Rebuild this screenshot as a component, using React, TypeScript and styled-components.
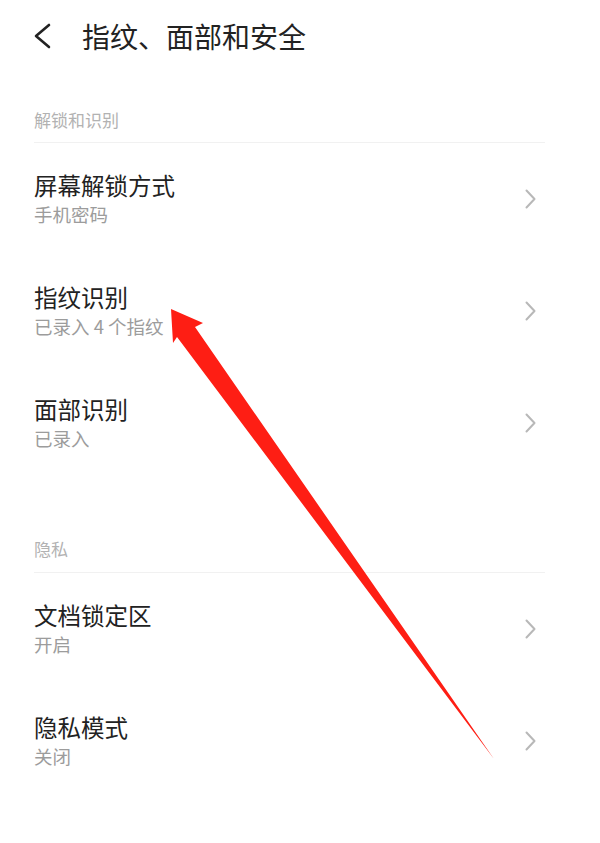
import React from "react";
import styled, { createGlobalStyle } from "styled-components";

const Global = createGlobalStyle`
  html, body { margin: 0; padding: 0; background: #fff; }
  body { font-family: "Noto Sans CJK SC", "Noto Sans", sans-serif; }
`;

const Page = styled.div`
  position: relative;
  width: 600px;
  min-height: 843px;
  background: #fff;
  overflow: hidden;
`;

const Header = styled.header`
  height: 74px;
  box-sizing: border-box;
  padding: 0 0 3px 33px;
  display: flex;
  align-items: center;
`;

const BackIcon = styled.svg`
  width: 20px;
  height: 28px;
  flex: none;
`;

const Title = styled.h1`
  margin: 0 0 0 29px;
  font-size: 28px;
  font-weight: 400;
  line-height: 36px;
  color: #222;
`;

const List = styled.div`
  padding: 0 55px 0 34px;
`;

const SectionTitle = styled.div<{ $top: number; $bottom: number }>`
  padding-top: ${(p) => p.$top}px;
  padding-bottom: ${(p) => p.$bottom}px;
  border-bottom: 1px solid #f1f1f1;
  font-size: 17px;
  line-height: 24px;
  color: #b2b2b2;
`;

const Row = styled.div`
  height: 112px;
  display: flex;
  align-items: center;
  justify-content: space-between;
`;

const Texts = styled.div`
  display: flex;
  flex-direction: column;
`;

const RowTitle = styled.div`
  font-size: 23.5px;
  line-height: 30px;
  color: #222;
`;

const RowSub = styled.div`
  font-size: 18.5px;
  line-height: 28px;
  color: #9c9c9c;
`;

const Chevron = styled.svg`
  width: 11px;
  height: 20px;
  margin-right: 9px;
  flex: none;
`;

const Overlay = styled.svg`
  position: absolute;
  left: 0;
  top: 0;
  width: 600px;
  height: 843px;
  pointer-events: none;
`;

type Item = { title: string; sub: string };

const sections: { label: string; top: number; bottom: number; items: Item[] }[] = [
  {
    label: "解锁和识别",
    top: 34,
    bottom: 10,
    items: [
      { title: "屏幕解锁方式", sub: "手机密码" },
      { title: "指纹识别", sub: "已录入 4 个指纹" },
      { title: "面部识别", sub: "已录入" },
    ],
  },
  {
    label: "隐私",
    top: 58,
    bottom: 11,
    items: [
      { title: "文档锁定区", sub: "开启" },
      { title: "隐私模式", sub: "关闭" },
    ],
  },
];

export default function App() {
  return (
    <Page>
      <Global />
      <Header>
        <BackIcon viewBox="0 0 20 28">
          <path d="M16 3 L3 14 L16 25" fill="none" stroke="#222" strokeWidth="2.6" strokeLinecap="round" strokeLinejoin="round" />
        </BackIcon>
        <Title>指纹、面部和安全</Title>
      </Header>
      <List>
        {sections.map((s) => (
          <React.Fragment key={s.label}>
            <SectionTitle $top={s.top} $bottom={s.bottom}>{s.label}</SectionTitle>
            {s.items.map((it) => (
              <Row key={it.title}>
                <Texts>
                  <RowTitle>{it.title}</RowTitle>
                  <RowSub>{it.sub}</RowSub>
                </Texts>
                <Chevron viewBox="0 0 11 20">
                  <path d="M1.5 1.5 L9.5 10 L1.5 18.5" fill="none" stroke="#b8b8b8" strokeWidth="2" strokeLinecap="round" strokeLinejoin="round" />
                </Chevron>
              </Row>
            ))}
          </React.Fragment>
        ))}
      </List>
      <Overlay viewBox="0 0 600 843">
        <polygon points="171,309 203,323 195,327 494,759 177,337 173,343" fill="#fe1e14" />
      </Overlay>
    </Page>
  );
}
